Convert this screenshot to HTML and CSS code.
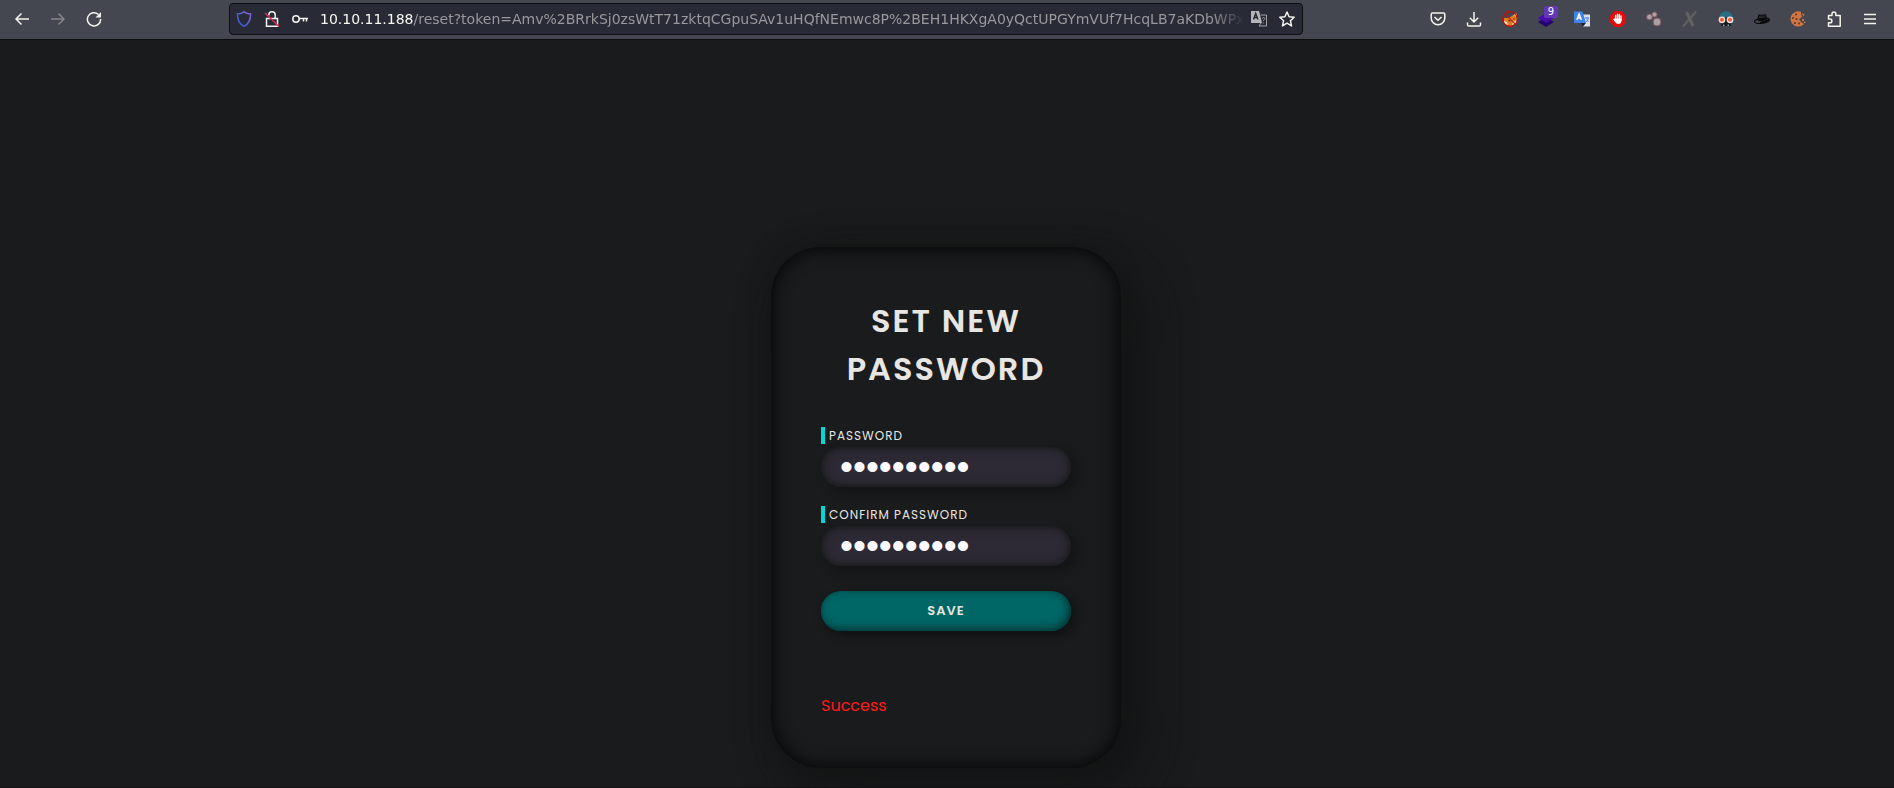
FILE: index.html
```
<!DOCTYPE html>
<html lang="en">
<head>
<meta charset="utf-8">
<title>Set new password</title>
<link rel="stylesheet" href="styles.css">
</head>
<body>
<header class="toolbar">
  <nav class="nav" aria-label="Navigation">
    <button class="tool" aria-label="Back"><svg class="line" viewBox="0 0 16 16"><path d="M15 8H2M7.500 2.500L2 8l5.500 5.500"/></svg></button>
    <button class="tool dim" aria-label="Forward"><svg class="line" viewBox="0 0 16 16"><path d="M1 8h13M8.500 2.500L14 8l-5.500 5.500"/></svg></button>
    <button class="tool" aria-label="Reload"><svg class="line" viewBox="0 0 16 16"><path d="M12.500 3.500A6.600 6.600 0 1 0 14.600 8"/><path d="M15 1v5.500H9.500z" fill="currentColor" stroke="none"/></svg></button>
  </nav>
  <div class="address">
    <button class="tool" aria-label="Tracking protection"><svg class="line" viewBox="0 0 16 16"><defs><linearGradient id="shield" x1="0" y1="1" x2="1" y2="0"><stop offset="0" stop-color="#2a5ad8"/><stop offset="1" stop-color="#8a66e0"/></linearGradient></defs><path stroke="url(#shield)" d="M8 .8c2 1.500 4 2 6.500 2.200C14.700 9 13 13 8 15.300 3 13 1.300 9 1.500 3 4 2.800 6 2.300 8 .8z"/></svg></button>
    <button class="tool" aria-label="Connection not secure"><svg class="line" viewBox="0 0 16 16"><path d="M2.500 7.500h11v7.700h-11zM4.800 4.500V4a3.200 3.200 0 0 1 6.400 0v3"/><path stroke="#e22850" d="M1 2l14 13.500"/></svg></button>
    <button class="tool" aria-label="Saved logins"><svg class="line" viewBox="0 0 16 16"><circle cx="4" cy="8" r="3.200"/><path d="M7.200 7.500H16M11.500 7.500v3M14.500 7.500v3"/></svg></button>
    <div class="url"><span class="host">10.10.11.188</span>/reset?token=Amv%2BRrkSj0zsWtT71zktqCGpuSAv1uHQfNEmwc8P%2BEH1HKXgA0yQctUPGYmVUf7HcqLB7aKDbWPx</div>
    <button class="tool" aria-label="Translate page"><svg class="line" viewBox="0 0 16 16"><path d="M0 0h8l3 12H0z" fill="#b5b6ba" stroke="none"/><path d="M9.500 4H15.500v11H8l2-3" stroke="#a0a1a6" stroke-width="1"/><path d="M2.500 8.500l2.200-6 2.200 6M3.200 6.500h3" stroke="#282a36"/><path d="M11.300 7.500c.5-1.500 3-1 2.300.5-.3.800-1.300.8-1.300 2M12.200 11.500v1" stroke="#a0a1a6" stroke-width="1"/></svg></button>
    <button class="tool" aria-label="Bookmark"><svg class="line" viewBox="0 0 16 16"><path stroke-linejoin="round" d="M8 1l2.100 4.700 5.100.5-3.800 3.500 1.100 5.200L8 12.200l-4.500 2.700 1.100-5.200L.8 6.200l5.100-.5z"/></svg></button>
  </div>
  <div class="extensions">
    <button class="tool" aria-label="Pocket"><svg class="line" viewBox="0 0 16 16"><path d="M2.500 2h11q1.300 0 1.300 1.300V7a6.800 6.800 0 0 1-13.600 0V3.300Q1.200 2 2.500 2zM4.500 6L8 9.300 11.500 6"/></svg></button>
    <button class="tool" aria-label="Downloads"><svg class="line" viewBox="0 0 16 16"><path d="M8 1v10M3.800 6.800L8 11l4.200-4.200M1.500 11.500v2.200q0 1.300 1.300 1.300h10.400q1.300 0 1.300-1.300v-2.200"/></svg></button>
    <button class="tool" aria-label="Fox blocker"><svg viewBox="0 0 16 16"><path fill="#df7d1b" d="M2 7l5 0 7-5 1.300 5-1.300 5-5 3-5-1-2-2z"/><path fill="#f3e3cf" d="M12 4l2.500-1.500V6zM2 10l3 1 1 3-3-1zM11 11l4-2-1.500 4-3.500 1z"/><path fill="#5b3518" d="M6.500 9h1.700v1.600H6.500zM10.500 8l2-1v1.700z"/><circle cx="8" cy="8" r="7.300" fill="none" stroke="#c90d0d" stroke-width="1.200"/><path d="M2.800 2.800l10.400 10.400" stroke="#c90d0d" stroke-width="1.200"/></svg></button>
    <button class="tool" aria-label="Layers, 9"><svg viewBox="0 0 16 16"><path fill="#22066b" d="M0 11l8-5 8 5-8 5z"/><path fill="#4b0bad" d="M0 7l8-5 8 5-8 5z"/></svg><span class="badge">9</span></button>
    <button class="tool" aria-label="Translator"><svg viewBox="0 0 16 16"><path fill="#dcdfe5" d="M8 3.500h8v12H9z"/><path fill="#3f82e8" d="M0 .5h8.500L12 12H0z"/><path fill="#12213f" d="M7 12h5l-3 3.500z"/><path d="M2.800 9l2.300-6 2.300 6M3.600 7h3" stroke="#fff" fill="none" stroke-width="1.400"/><path d="M11 7h4M13 6v1M14.500 7c-.5 2-1.500 3-2.500 4M12.500 8.500l2 2.500" stroke="#4b83d8" fill="none"/></svg></button>
    <button class="tool" aria-label="Content blocker"><svg viewBox="0 0 16 16"><path fill="#e30b0b" d="M4.700 0h6.600L16 4.700v6.600L11.300 16H4.700L0 11.300V4.700z"/><path fill="#fff" d="M5 7.500h6.500V10q-.3 3-3.200 3-2 0-3-1.800L3.500 8z"/><path stroke="#fff" stroke-width="1.400" stroke-linecap="round" fill="none" d="M5.600 9V4.500M7.500 9V3.200M9.300 9V3.500M11 9V5M4 8.300l1.500 2"/></svg></button>
    <button class="tool" aria-label="Containers"><svg viewBox="0 0 16 16" fill="#a9a0a6" stroke="#80545b"><circle cx="3.500" cy="6" r="2.900"/><circle cx="8.500" cy="3.500" r="2.600"/><circle cx="11" cy="11" r="4"/></svg></button>
    <button class="tool" aria-label="X tools"><svg viewBox="0 0 16 16" stroke="#626262"><path stroke-width="3" d="M4.500 1l6.500 14"/><path stroke-width="2" d="M14 .5L1 15.500"/></svg></button>
    <button class="tool" aria-label="User agent"><svg viewBox="0 0 16 16"><path fill="#287184" d="M1 12V7.500a7 7.300 0 0 1 14 0V12z"/><path fill="#16191d" d="M2.500 6.500h11v5l-1 3.500h-9l-1-3.500z"/><circle cx="4" cy="8.800" r="2.700" fill="#eb5c3d" stroke="#f1dfda" stroke-width="1.400"/><circle cx="12" cy="8.800" r="2.700" fill="#eb5c3d" stroke="#f1dfda" stroke-width="1.400"/><path fill="#75a9b3" d="M5 13.500h1.500V15H5zM9.500 13.500H11V15H9.500z"/></svg></button>
    <button class="tool" aria-label="Hat"><svg viewBox="0 0 16 16"><ellipse cx="8" cy="9.700" rx="7.500" ry="2.500" fill="#3a3d44" stroke="#050606" transform="rotate(-8 8 9.700)"/><path fill="#24262b" stroke="#050505" d="M4 9l.7-5q3.500.8 7-.3l.8 4.300Q8 10 4 9z"/><path fill="#08090a" d="M4 7q4 1 8.500-.8v2.300Q8 10.500 4 9zM6 11l9-3v1.500q-3 3-9 2.800z"/></svg></button>
    <button class="tool" aria-label="Cookies"><svg viewBox="0 0 16 16"><path fill="#cf7442" d="M11 .7A7.700 7.700 0 1 0 14 13l-3-2-2-3 3-2-1-3z"/><g fill="#603722"><circle cx="6" cy="3.500" r="1"/><circle cx="3" cy="7" r="1"/><circle cx="6.500" cy="8" r="1"/><circle cx="5" cy="12" r="1.100"/><circle cx="9" cy="12.500" r="1"/></g><path fill="#cf7442" d="M12 2l3 2-2 1zM12 8h2v2h-2zM14 10.500h1.500V12H14z"/></svg></button>
    <button class="tool" aria-label="Extensions"><svg class="line" viewBox="0 0 16 16"><path stroke-linejoin="round" d="M2.500 6V4.500H6V3a1.900 1.900 0 0 1 3.800 0v1.500h4.400v10.700H2.500v-3.400H4a1.900 1.900 0 0 0 0-3.800H2.500V6"/></svg></button>
    <button class="tool" aria-label="Menu"><svg class="line" viewBox="0 0 16 16"><path d="M2 3.500h12M2 8h12M2 12.500h12"/></svg></button>
  </div>
</header>
<main class="page">
  <form class="card">
    <h1 class="title">Set new password</h1>
    <div class="field">
      <label class="label" for="password">Password</label>
      <input class="input" id="password" type="password" value="password12">
    </div>
    <div class="field">
      <label class="label" for="confirm">Confirm password</label>
      <input class="input" id="confirm" type="password" value="password12">
    </div>
    <button class="save" type="button">Save</button>
    <p class="message">Success</p>
  </form>
</main>
</body>
</html>
```
FILE: styles.css
```
* {
  box-sizing: border-box;
}

body {
  margin: 0;
  min-height: 100vh;
  display: flex;
  flex-direction: column;
  background: #191b1c;
  color: #e8e6e3;
  font-family: Poppins, Inter, sans-serif;
}

button {
  border: 0;
  padding: 0;
  background: none;
  color: inherit;
  font: inherit;
}

.toolbar {
  height: 40px;
  display: flex;
  align-items: center;
  justify-content: space-between;
  padding: 0 16px 1px 14px;
  background: #44474f;
  border-bottom: 1px solid #0d0e10;
  color: #f4f4ee;
  font-family: "DejaVu Sans", sans-serif;
}

.nav,
.extensions {
  display: flex;
  gap: 20px;
}

.tool {
  position: relative;
  flex: none;
  width: 16px;
  height: 16px;
}

.tool svg {
  display: block;
  width: 16px;
  height: 16px;
}

.line {
  fill: none;
  stroke: currentColor;
  stroke-width: 1.5;
}

.dim {
  color: #84858a;
}

.badge {
  position: absolute;
  top: -5px;
  left: 6px;
  width: 14px;
  height: 12px;
  border-radius: 2px;
  background: #6238b5;
  color: #fff;
  font-size: 10px;
  line-height: 12px;
  text-align: center;
}

.address {
  flex: 1;
  max-width: 1074px;
  height: 32px;
  display: flex;
  align-items: center;
  gap: 12px;
  margin: 0 auto 0 127px;
  padding: 0 7px 0 6px;
  background: #282a36;
  border: 1px solid #0d0e12;
  border-radius: 4px;
}

.url {
  flex: 1;
  min-width: 0;
  margin-right: -6px;
  overflow: hidden;
  white-space: nowrap;
  font-size: 14px;
  line-height: 20px;
  color: #98999a;
  mask-image: linear-gradient(to left, transparent, #000 32px);
}

.host {
  color: #f8f8f2;
}

.page {
  flex: 1;
  display: flex;
  justify-content: center;
  align-items: flex-end;
  padding: 0 2px 19px 0;
  border-bottom: 1px solid #141115;
}

.card {
  width: 350px;
  display: flex;
  flex-direction: column;
  padding: 50px;
  border-radius: 50px;
  background: #1a1b1c;
  box-shadow: 20px 20px 50px #121414, 0 0 20px #161817, inset 0 0 18px #020303;
}

.title {
  margin: 0 0 34px;
  font-size: 32px;
  font-weight: 600;
  line-height: 48px;
  letter-spacing: 2px;
  text-align: center;
  text-transform: uppercase;
}

.field {
  display: flex;
  flex-direction: column;
  gap: 3px;
  margin-bottom: 19px;
}

.label {
  padding-left: 4px;
  border-left: 4px solid #00d8d8;
  font-size: 12px;
  line-height: 17px;
  letter-spacing: 1px;
  text-transform: uppercase;
}

.input {
  width: 100%;
  height: 40px;
  padding: 0 19px;
  border: 0;
  border-radius: 20px;
  background: #2d2a35;
  color: #fcfaff;
  font: 37px "Liberation Sans", sans-serif;
  box-shadow: inset 0 0 12px #1a1b1c, inset 0 0 4px #1a1b1c, 5px 5px 10px #131415;
}

.save {
  height: 40px;
  margin-top: 6px;
  border-radius: 20px;
  background: #006666;
  font-size: 13px;
  font-weight: 600;
  letter-spacing: 1px;
  text-transform: uppercase;
  box-shadow: inset -2px -2px 10px #002e2e, 4px 4px 10px #101112;
}

.message {
  margin: 63px 0 0;
  color: #ff1a1a;
  font-size: 16px;
  line-height: 24px;
}
```
